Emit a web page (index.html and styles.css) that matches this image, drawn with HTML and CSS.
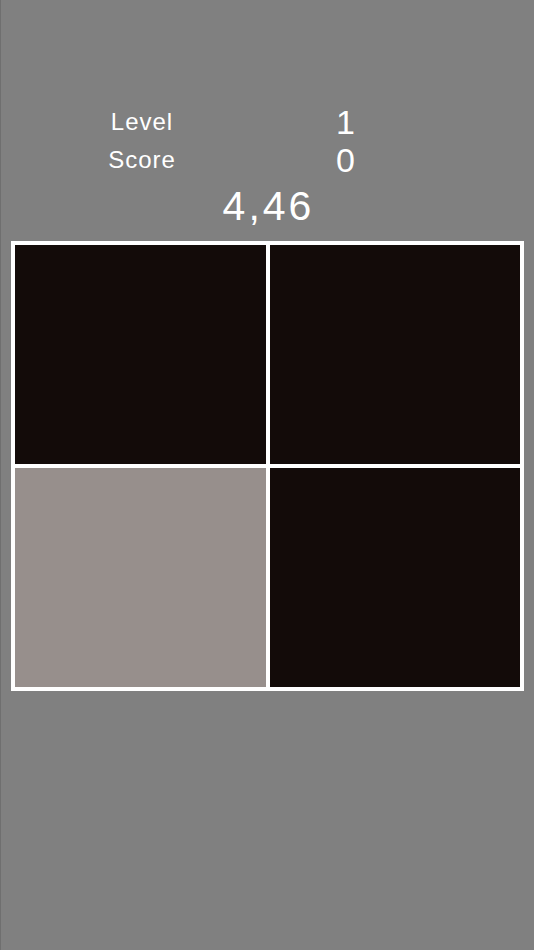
FILE: index.html
```html
<!DOCTYPE html>
<html>
<head>
<meta charset="utf-8">
<link rel="stylesheet" href="styles.css">
</head>
<body>
<div class="screen">
  <div class="stats">
    <div class="label">Level</div>
    <div class="value">1</div>
    <div class="label">Score</div>
    <div class="value">0</div>
  </div>
  <div class="timer">4,46</div>
  <div class="board">
    <div class="cell dark"></div>
    <div class="cell dark"></div>
    <div class="cell light"></div>
    <div class="cell dark"></div>
  </div>
</div>
</body>
</html>
```

FILE: styles.css
```css
html, body {
  margin: 0;
  padding: 0;
  background: #808080;
  overflow: hidden;
}
.screen {
  width: 534px;
  height: 950px;
  box-sizing: border-box;
  border-left: 1px solid #6f6f6f;
  padding-top: 103px;
  font-family: "Liberation Sans", Arial, sans-serif;
  color: #ffffff;
}
.stats {
  display: grid;
  grid-template-columns: 200px 200px;
  column-gap: 4px;
  grid-auto-rows: 38px;
  align-items: center;
  margin-left: 41px;
  text-align: center;
}
.label {
  font-size: 24px;
  line-height: 38px;
  letter-spacing: 1px;
}
.value {
  font-size: 34px;
  line-height: 38px;
  letter-spacing: 1px;
}
.timer {
  margin-top: 7px;
  font-size: 41px;
  line-height: 40px;
  letter-spacing: 3px;
  text-align: center;
  padding-left: 2px;
  height: 40px;
}
.board {
  margin-top: 15px;
  margin-left: 10px;
  width: 513px;
  height: 450px;
  box-sizing: border-box;
  background: #ffffff;
  padding: 4px;
  display: grid;
  grid-template-columns: 1fr 1fr;
  grid-template-rows: 1fr 1fr;
  gap: 4px;
}
.cell.dark {
  background: #130b09;
}
.cell.light {
  background: #978f8c;
}
```
